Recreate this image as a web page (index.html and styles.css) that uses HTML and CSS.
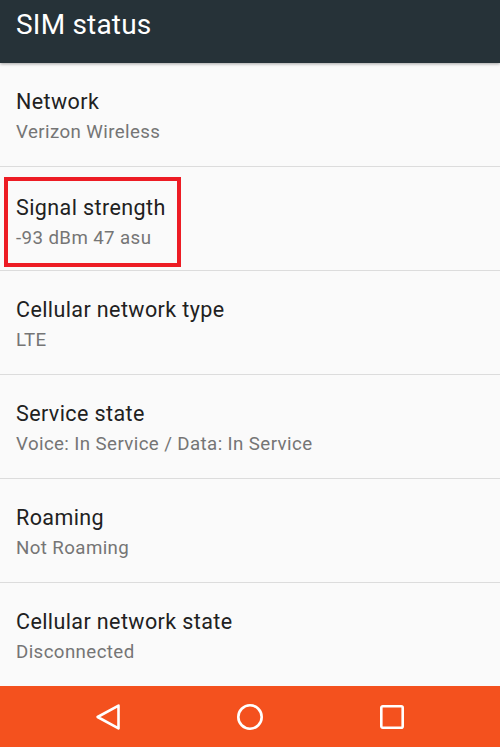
FILE: index.html
```html
<!DOCTYPE html>
<html>
<head>
<meta charset="utf-8">
<link rel="stylesheet" href="styles.css">
</head>
<body>
<div class="screen">
  <header class="appbar"><h1 class="appbar-title">SIM status</h1></header>
  <main class="list">
    <div class="item"><div class="item-title">Network</div><div class="item-sub">Verizon Wireless</div></div>
    <div class="item"><div class="highlight"><div class="item-title">Signal strength</div><div class="item-sub">-93 dBm 47 asu</div></div></div>
    <div class="item"><div class="item-title">Cellular network type</div><div class="item-sub">LTE</div></div>
    <div class="item"><div class="item-title">Service state</div><div class="item-sub">Voice: In Service / Data: In Service</div></div>
    <div class="item"><div class="item-title">Roaming</div><div class="item-sub">Not Roaming</div></div>
    <div class="item last"><div class="item-title">Cellular network state</div><div class="item-sub">Disconnected</div></div>
  </main>
  <nav class="navbar">
    <svg class="nav-icon" viewBox="0 0 26 26" width="26" height="26"><path d="M23.5 1.6 L2.6 13 L23.5 24.4 Z" fill="none" stroke="#fff" stroke-width="2.6" stroke-linejoin="round"/></svg>
    <svg class="nav-icon" viewBox="0 0 26 26" width="26" height="26"><circle cx="13" cy="13" r="11.7" fill="none" stroke="#fff" stroke-width="2.6"/></svg>
    <svg class="nav-icon" viewBox="0 0 26 26" width="26" height="26"><rect x="2.3" y="2.3" width="21.4" height="21.4" rx="1.5" fill="none" stroke="#fff" stroke-width="2.6"/></svg>
  </nav>
</div>
</body>
</html>
```
FILE: styles.css
```css
html, body { margin: 0; padding: 0; }
body { font-family: Roboto, "Noto Sans", sans-serif; background: #fafafa; }
.screen { width: 500px; height: 747px; display: flex; flex-direction: column; overflow: hidden; }
.appbar { height: 63px; background: #263238; box-shadow: 0 1px 3px rgba(0,0,0,0.35); position: relative; z-index: 1; flex: none; }
.appbar-title { margin: 0; padding: 7px 0 0 16px; color: #fff; font-weight: 400; font-size: 28px; line-height: 36px; letter-spacing: 0.2px; }
.list { flex: 1; background: #fafafa; }
.item { height: 100px; padding-top: 3px; border-bottom: 1px solid #dcdcdc; display: flex; flex-direction: column; justify-content: center; padding-left: 16px; }
.item.last { border-bottom: none; }
.item-title { font-size: 21.5px; line-height: 28px; letter-spacing: 0.4px; color: #212121; }
.item-sub { margin-top: 3px; font-size: 18.7px; line-height: 26px; letter-spacing: 0.4px; color: #757575; }
.highlight { box-sizing: border-box; margin: 4px 0 0 -12px; width: 177px; height: 90px; border: 4px solid #ed1c24; padding-left: 8px; display: flex; flex-direction: column; justify-content: center; }
.navbar { height: 61px; flex: none; background: #f4511e; display: flex; justify-content: center; align-items: center; gap: 116px; }
.nav-icon { display: block; }
```
